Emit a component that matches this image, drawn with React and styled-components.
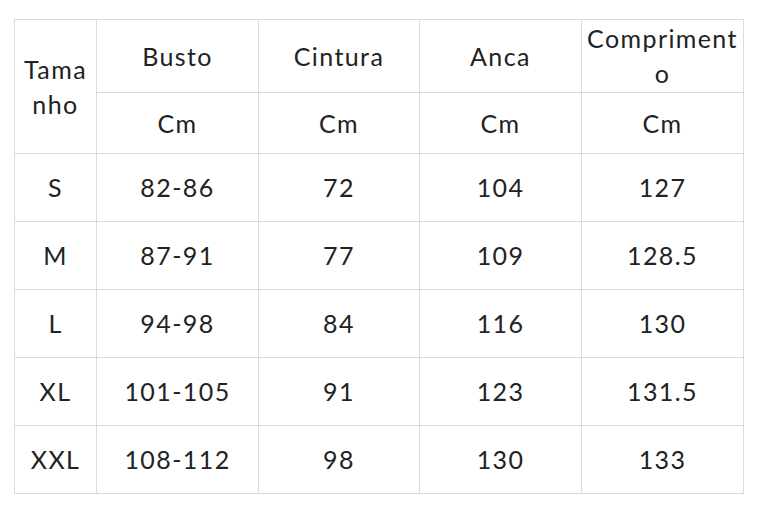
import React from 'react';
import styled, { createGlobalStyle } from 'styled-components';

const GlobalStyle = createGlobalStyle`
  html, body {
    margin: 0;
    padding: 0;
    background: #ffffff;
  }
  body {
    font-family: Lato, "Noto Sans", sans-serif;
    color: #222222;
  }
`;

const Page = styled.div`
  padding: 19px 0 0 14px;
`;

const Table = styled.table`
  border-collapse: collapse;
  table-layout: fixed;
  width: 729px;
`;

const Cell = styled.td`
  border: 1px solid #dcdcdc;
  padding: 0 ${(p) => (p.$label ? 7 : 1)}px;
  text-align: center;
  vertical-align: middle;
  font-size: 25px;
  line-height: 35px;
  font-weight: 400;
  letter-spacing: 1.4px;
  word-break: break-all;
  color: #222222;
`;

const Row = styled.tr`
  height: ${(p) => p.$h}px;
`;

const sizes = [
  ['S', '82-86', '72', '104', '127'],
  ['M', '87-91', '77', '109', '128.5'],
  ['L', '94-98', '84', '116', '130'],
  ['XL', '101-105', '91', '123', '131.5'],
  ['XXL', '108-112', '98', '130', '133'],
];

const widths = [82, 162, 161, 162, 162];

export default function App() {
  return (
    <>
      <GlobalStyle />
      <Page>
        <Table>
          <colgroup>
            {widths.map((w, i) => (
              <col key={i} style={{ width: w }} />
            ))}
          </colgroup>
          <tbody>
            <Row $h={73}>
              <Cell rowSpan={2} $label>Tamanho</Cell>
              <Cell>Busto</Cell>
              <Cell>Cintura</Cell>
              <Cell>Anca</Cell>
              <Cell>Comprimento</Cell>
            </Row>
            <Row $h={61}>
              <Cell>Cm</Cell>
              <Cell>Cm</Cell>
              <Cell>Cm</Cell>
              <Cell>Cm</Cell>
            </Row>
            {sizes.map((r) => (
              <Row key={r[0]} $h={68}>
                {r.map((v, i) => (
                  <Cell key={i} $label={i === 0}>{v}</Cell>
                ))}
              </Row>
            ))}
          </tbody>
        </Table>
      </Page>
    </>
  );
}
